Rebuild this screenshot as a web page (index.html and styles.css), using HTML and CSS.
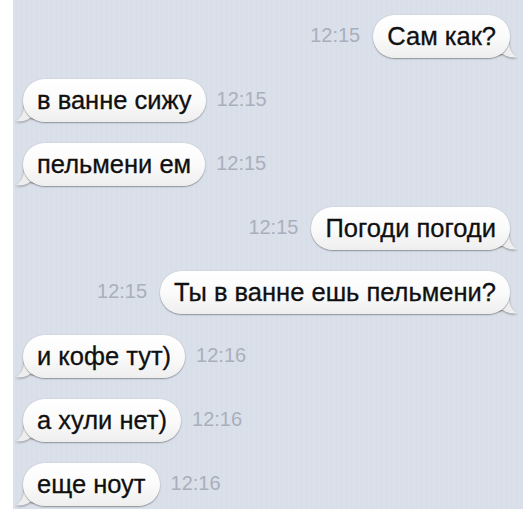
FILE: index.html
```html
<!DOCTYPE html>
<html lang="ru">
<head>
<meta charset="utf-8">
<link rel="stylesheet" href="styles.css">
</head>
<body>
<div class="chat">
  <div class="row out"><span class="time">12:15</span><div class="bubble">Сам как?<svg class="tail" viewBox="0 0 22 18"><path d="M8 0 C8 8 5 13 0 16 C5 17 10 16 14 13 L22 13 L22 0 Z"/></svg></div></div>
  <div class="row in"><div class="bubble">в ванне сижу<svg class="tail" viewBox="0 0 22 18"><path d="M8 0 C8 8 5 13 0 16 C5 17 10 16 14 13 L22 13 L22 0 Z"/></svg></div><span class="time">12:15</span></div>
  <div class="row in"><div class="bubble">пельмени ем<svg class="tail" viewBox="0 0 22 18"><path d="M8 0 C8 8 5 13 0 16 C5 17 10 16 14 13 L22 13 L22 0 Z"/></svg></div><span class="time">12:15</span></div>
  <div class="row out"><span class="time">12:15</span><div class="bubble">Погоди погоди<svg class="tail" viewBox="0 0 22 18"><path d="M8 0 C8 8 5 13 0 16 C5 17 10 16 14 13 L22 13 L22 0 Z"/></svg></div></div>
  <div class="row out"><span class="time">12:15</span><div class="bubble">Ты в ванне ешь пельмени?<svg class="tail" viewBox="0 0 22 18"><path d="M8 0 C8 8 5 13 0 16 C5 17 10 16 14 13 L22 13 L22 0 Z"/></svg></div></div>
  <div class="row in"><div class="bubble">и кофе тут)<svg class="tail" viewBox="0 0 22 18"><path d="M8 0 C8 8 5 13 0 16 C5 17 10 16 14 13 L22 13 L22 0 Z"/></svg></div><span class="time">12:16</span></div>
  <div class="row in"><div class="bubble">а хули нет)<svg class="tail" viewBox="0 0 22 18"><path d="M8 0 C8 8 5 13 0 16 C5 17 10 16 14 13 L22 13 L22 0 Z"/></svg></div><span class="time">12:16</span></div>
  <div class="row in"><div class="bubble">еще ноут<svg class="tail" viewBox="0 0 22 18"><path d="M8 0 C8 8 5 13 0 16 C5 17 10 16 14 13 L22 13 L22 0 Z"/></svg></div><span class="time">12:16</span></div>
</div>
</body>
</html>
```
FILE: styles.css
```css
html, body {
  margin: 0;
  padding: 0;
  background: #ffffff;
}
body {
  font-family: "Liberation Sans", Arial, sans-serif;
}
.chat {
  margin-left: 13px;
  width: 510px;
  height: 509px;
  box-sizing: border-box;
  padding-top: 15px;
  background-color: #d9dfe9;
  background-image: repeating-linear-gradient(90deg, rgba(255,255,255,0.06) 0 2px, rgba(0,0,0,0) 2px 5px);
  display: flex;
  flex-direction: column;
  gap: 21px;
  isolation: isolate;
  overflow: hidden;
}
.row {
  display: flex;
  align-items: center;
}
.row.in {
  padding-left: 10px;
  gap: 11px;
}
.row.out {
  justify-content: flex-end;
  padding-right: 13px;
  gap: 13px;
}
.bubble {
  position: relative;
  background: linear-gradient(#ffffff 0%, #fbfbfb 50%, #eeeeee 100%);
  border-radius: 22px;
  box-shadow: 0 1px 1.5px rgba(0,0,0,0.35), 0 0 1px rgba(0,0,0,0.2);
  padding: 6px 14px;
  font-size: 25.5px;
  line-height: 31px;
  color: #101010;
  -webkit-text-stroke: 0.3px #101010;
  white-space: nowrap;
}
.tail {
  position: absolute;
  bottom: -1px;
  width: 22px;
  height: 18px;
  z-index: -1;
  fill: #eeeeee;
  filter: drop-shadow(0 1px 0.8px rgba(0,0,0,0.35));
}
.in .tail {
  left: -7px;
}
.out .tail {
  right: -7px;
  transform: scaleX(-1);
}
.time {
  font-size: 20px;
  color: #a9afbc;
  margin-top: -2px;
}
```
